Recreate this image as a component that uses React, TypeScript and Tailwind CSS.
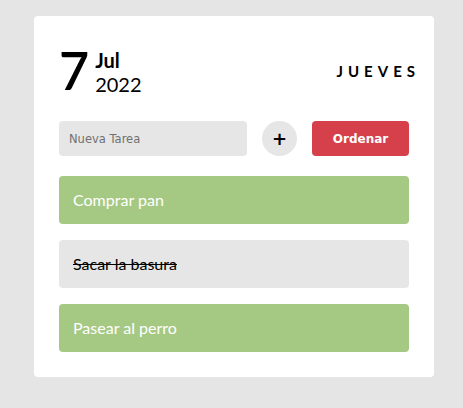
import React from 'react';

const tasks = [
    { id: 1, name: 'Comprar pan', done: false },
    { id: 2, name: 'Sacar la basura', done: true },
    { id: 3, name: 'Pasear al perro', done: false },
];

export default function App() {
    return (
        <div className="min-h-[408px] w-full bg-[#e5e5e5] pt-4 pl-[34px] pb-[31px]" style={{ fontFamily: 'Lato, "Open Sans", sans-serif' }}>
            <div className="w-[400px] rounded-[4px] bg-white px-[25px] pt-[28px] pb-[25px]">
                {/* Date header */}
                <div className="flex items-center justify-between">
                    <div className="flex items-end">
                        <span className="text-[52px] font-semibold leading-none text-black">7</span>
                        <div className="ml-[6px] flex flex-col text-[20px] leading-[24px] text-black">
                            <span className="font-bold">Jul</span>
                            <span>2022</span>
                        </div>
                    </div>
                    <span className="-mr-[11px] mt-[3px] text-[15px] font-bold tracking-[5px] text-black">JUEVES</span>
                </div>

                {/* New task form */}
                <div className="mt-[25px] flex items-center gap-[15px]">
                    <input
                        placeholder="Nueva Tarea"
                        className="h-[35px] w-[188px] rounded-[4px] bg-[#e6e6e6] px-[10px] text-[12px] text-black outline-none placeholder:text-[#707070]"
                        style={{ fontFamily: '"DejaVu Sans", sans-serif', fontSize: '11.5px' }}
                    />
                    <button
                        className="flex h-[35px] w-[35px] items-center justify-center rounded-full bg-[#e6e6e6] text-[18px] font-bold text-black"
                        style={{ fontFamily: '"DejaVu Sans", sans-serif' }}
                    >
                        +
                    </button>
                    <button
                        className="h-[35px] w-[97px] rounded-[4px] bg-[#d6404b] text-[12px] font-bold text-white"
                        style={{ fontFamily: '"DejaVu Sans", sans-serif' }}
                    >
                        Ordenar
                    </button>
                </div>

                {/* Task list */}
                <div className="mt-[20px] flex flex-col gap-[16px]">
                    {tasks.map(task => (
                        <div
                            key={task.id}
                            className={`flex h-[48px] items-center rounded-[4px] px-[14px] text-[16px] ${
                                task.done ? 'bg-[#e6e6e6] text-black line-through' : 'bg-[#a5c983] text-white'
                            }`}
                        >
                            {task.name}
                        </div>
                    ))}
                </div>
            </div>
        </div>
    );
}
